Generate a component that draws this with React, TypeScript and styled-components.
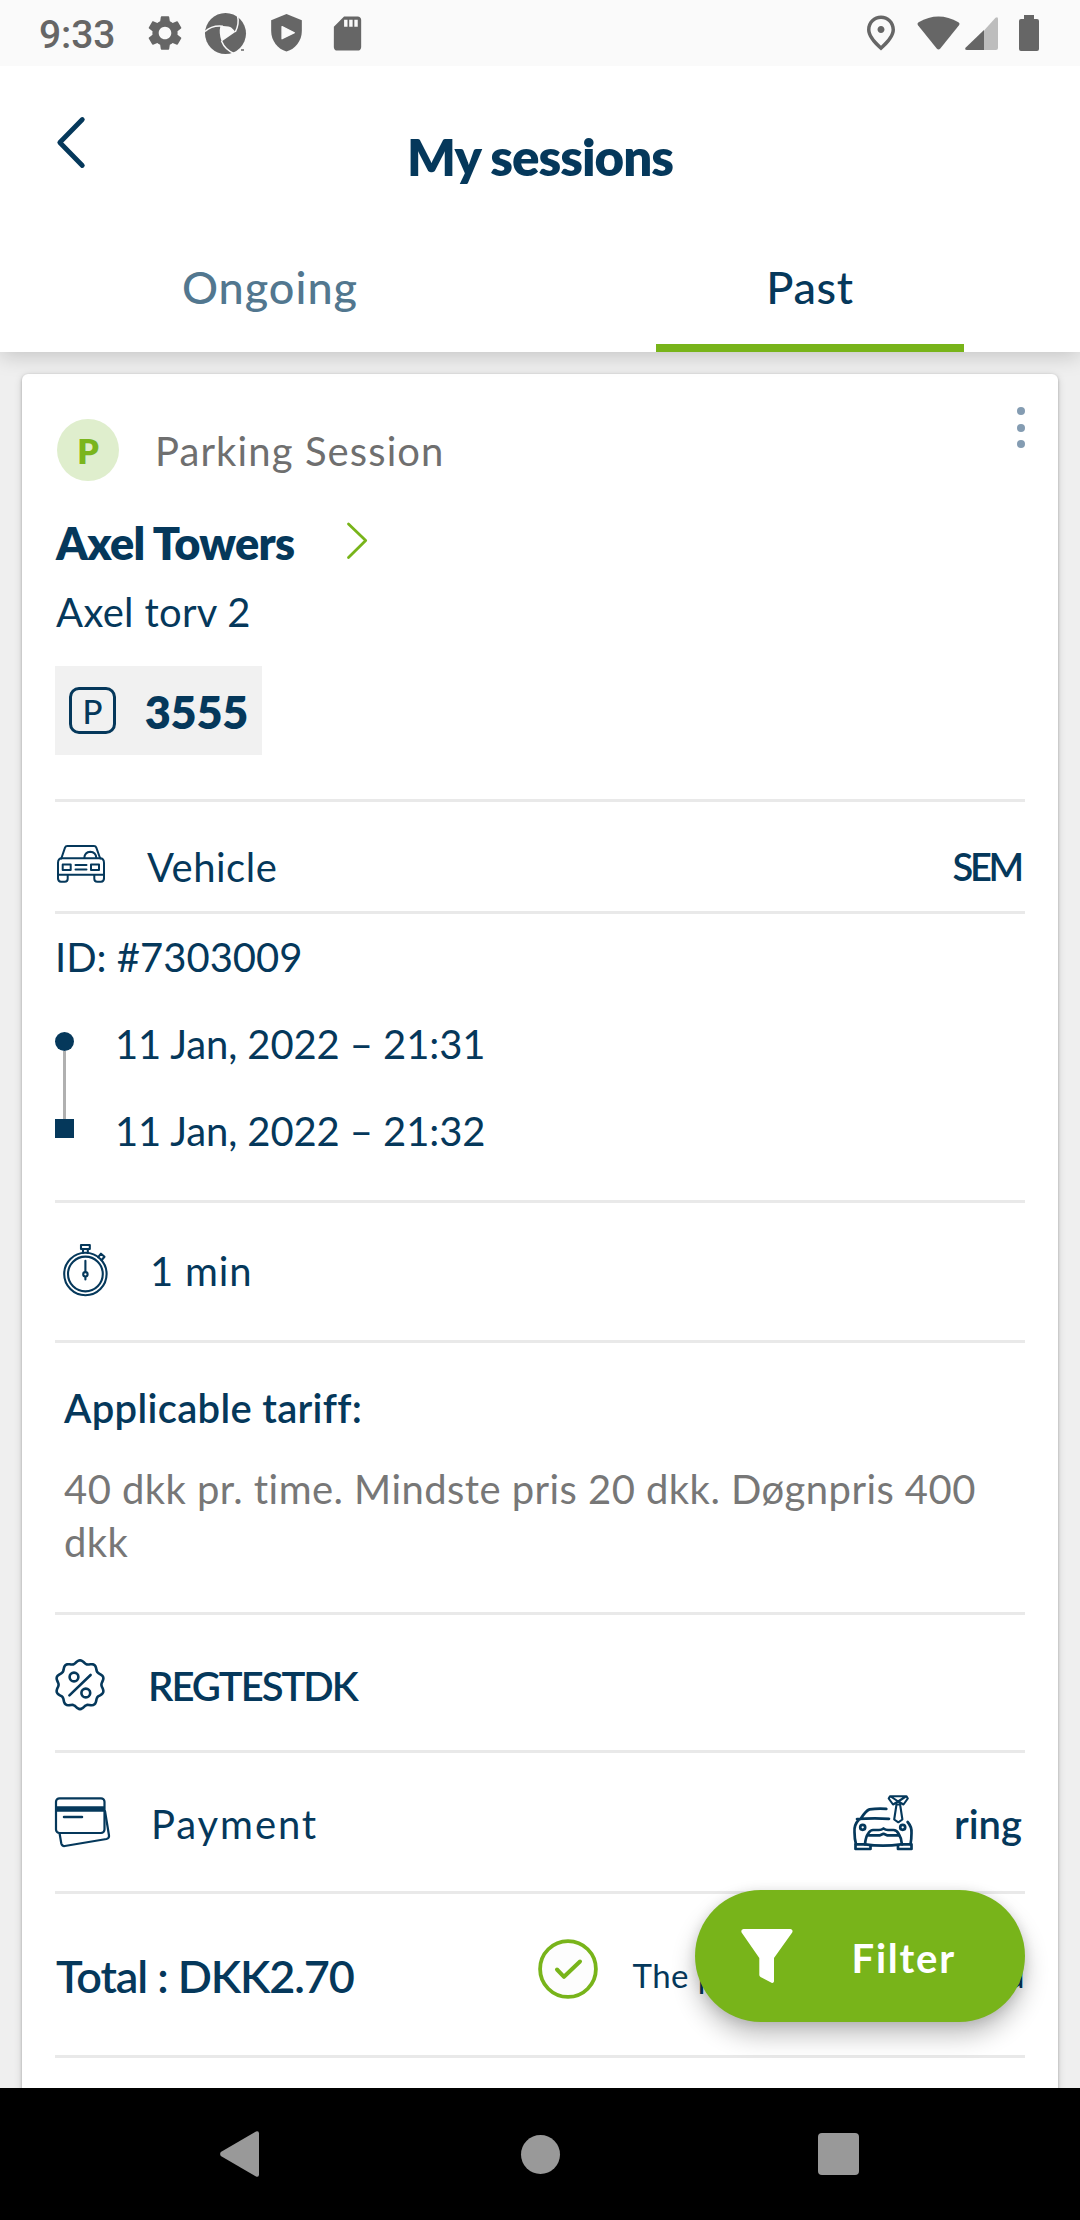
import React from "react";
import styled, { createGlobalStyle } from "styled-components";
import { MdSettings, MdSdCard, MdOutlinePlace } from "react-icons/md";

const NAVY = "#05385b";
const GREEN = "#78b41a";
const GREY = "#666666";

const GlobalStyle = createGlobalStyle`
  *, *::before, *::after { box-sizing: border-box; }
  body {
    margin: 0;
    background: #efefef;
    font-family: Lato, "Open Sans", sans-serif;
    color: ${NAVY};
  }
  button { font-family: inherit; color: inherit; }
  svg { display: block; flex: none; overflow: visible; }
`;

const Screen = styled.div`
  width: 1080px;
  height: 2220px;
  display: flex;
  flex-direction: column;
  overflow: hidden;
  position: relative;
`;

const StatusBar = styled.div`
  height: 66px;
  flex: none;
  display: flex;
  align-items: center;
  justify-content: space-between;
  padding: 0 41px 0 39px;
  background: #fafafa;
  color: ${GREY};
  position: relative;
  z-index: 2;
`;

const StatusGroup = styled.div`
  display: flex;
  align-items: center;
`;

const Clock = styled.span`
  width: 105px;
  font: 500 39px/46px Roboto, sans-serif;
  letter-spacing: -0.1px;
  padding-top: 3px;
`;

const IconSlot = styled.span<{ $w: number; $ml?: number }>`
  width: ${(p) => p.$w}px;
  height: 42px;
  margin-left: ${(p) => p.$ml ?? 0}px;
  display: flex;
  align-items: center;
  justify-content: center;
`;

const Header = styled.header`
  flex: none;
  height: 286px;
  background: #ffffff;
  box-shadow: 0 4px 20px rgba(0, 0, 0, 0.18);
  display: flex;
  flex-direction: column;
  position: relative;
  z-index: 1;
`;

const TitleBar = styled.div`
  display: grid;
  grid-template-columns: 120px 1fr 120px;
  height: 158px;
`;

const BackButton = styled.button`
  border: 0;
  padding: 51px 0 0 57px;
  background: none;
  display: flex;
  align-items: flex-start;
`;

const PageTitle = styled.h1`
  margin: 0;
  padding-top: 60px;
  text-align: center;
  font-size: 51px;
  line-height: 62px;
  font-weight: 800;
  letter-spacing: -1px;
`;

const Tabs = styled.nav`
  flex: 1;
  display: grid;
  grid-template-columns: 1fr 1fr;
`;

const Tab = styled.button<{ $active?: boolean }>`
  border: 0;
  background: none;
  padding: 36px 0 0;
  display: flex;
  flex-direction: column;
  align-items: center;
  justify-content: space-between;
  font-size: 45px;
  line-height: 54px;
  font-weight: 500;
  letter-spacing: ${(p) => (p.$active ? 0.7 : 1)}px;
  color: ${(p) => (p.$active ? NAVY : "#52778f")};

  &::after {
    content: "";
    width: 308px;
    height: 8px;
    background: ${(p) => (p.$active ? GREEN : "transparent")};
  }
`;

const Content = styled.main`
  flex: 1;
  min-height: 0;
  overflow: hidden;
  padding: 22px 22px 0;
`;

const Card = styled.article`
  height: 1800px;
  padding: 33px 33px 0;
  background: #ffffff;
  border-radius: 6px;
  box-shadow: 0 1px 3px rgba(0, 0, 0, 0.26), 0 2px 8px rgba(0, 0, 0, 0.14);
  display: flex;
  flex-direction: column;
`;

const SessionHead = styled.div`
  height: 74px;
  display: flex;
  align-items: flex-start;
`;

const TypeBadge = styled.span`
  width: 62px;
  height: 62px;
  margin: 12px 36px 0 2px;
  border-radius: 50%;
  background: #dfeecd;
  color: #7ab51d;
  font-size: 34px;
  font-weight: 800;
  display: flex;
  align-items: center;
  justify-content: center;
`;

const Text = styled.span<{ $ls?: number; $w?: number; $size?: number; $color?: string; $mr?: number }>`
  padding-top: 3px;
  margin-right: ${(p) => p.$mr ?? 0}px;
  font-size: ${(p) => p.$size ?? 40}px;
  line-height: 1.2;
  font-weight: ${(p) => p.$w ?? 400};
  letter-spacing: ${(p) => p.$ls ?? 0}px;
  color: ${(p) => p.$color ?? NAVY};
  white-space: nowrap;
`;

const SessionType = styled(Text)`
  margin-top: 17px;
`;

const MoreMenu = styled.button`
  border: 0;
  background: none;
  padding: 0;
  margin-left: auto;
  display: flex;
  flex-direction: column;
  gap: 8.5px;
`;

const MenuDot = styled.span`
  width: 8px;
  height: 8px;
  border-radius: 50%;
  background: #849cb2;
`;

const PlaceRow = styled.div`
  margin-top: 33px;
  padding-left: 1px;
  height: 54px;
  display: flex;
  align-items: center;
  justify-content: space-between;
  width: 312px;
`;

const Address = styled(Text)`
  margin: 17px 0 0 1px;
`;

const AreaCode = styled.div`
  width: 207px;
  height: 89px;
  margin: 30px 0 44px;
  padding: 0 14px;
  background: #f1f1f1;
  display: flex;
  align-items: center;
  justify-content: space-between;
`;

const AreaIcon = styled.span`
  width: 47px;
  height: 47px;
  border: 3px solid ${NAVY};
  border-radius: 10px;
  font-size: 33px;
  font-weight: 500;
  display: flex;
  align-items: center;
  justify-content: center;
`;

const Row = styled.div<{ $h: number; $pt?: number; $pb?: number }>`
  flex: none;
  height: ${(p) => p.$h + 3}px;
  padding: ${(p) => p.$pt ?? 0}px 0 ${(p) => p.$pb ?? 0}px;
  border-top: 3px solid #e9e9e9;
  display: flex;
  align-items: center;
`;

const Section = styled(Row)`
  flex-direction: column;
  align-items: flex-start;
`;

const RowIcon = styled.span<{ $w: number; $lift?: number; $pl?: number }>`
  width: ${(p) => p.$w}px;
  flex: none;
  padding-left: ${(p) => p.$pl ?? 0}px;
  padding-bottom: ${(p) => p.$lift ?? 0}px;
`;

const RowEnd = styled.div`
  margin-left: auto;
  display: flex;
  align-items: center;
`;

const Timeline = styled.div`
  margin-top: 36px;
  display: flex;
  gap: 41px;
`;

const Track = styled.div`
  width: 19px;
  padding-top: 15px;
  display: flex;
  flex-direction: column;
  align-items: center;
`;

const StartMark = styled.span`
  width: 19px;
  height: 19px;
  border-radius: 50%;
  background: ${NAVY};
`;

const TrackLine = styled.span`
  width: 3px;
  height: 68px;
  background: #b0b0b0;
`;

const EndMark = styled.span`
  width: 19px;
  height: 19px;
  background: ${NAVY};
`;

const Dates = styled.div`
  display: flex;
  flex-direction: column;
  gap: 36px;
`;

const TariffBody = styled.div`
  padding-left: 9px;
  display: flex;
  flex-direction: column;
`;

const TariffText = styled.p`
  margin: 31px 0 0;
  width: 940px;
  font-size: 40px;
  line-height: 53px;
  color: #777777;
  letter-spacing: 0.44px;
`;

const FilterButton = styled.button`
  position: absolute;
  left: 695px;
  top: 1890px;
  width: 330px;
  height: 132px;
  border: 0;
  border-radius: 66px;
  padding: 0 69px 0 46px;
  background: ${GREEN};
  box-shadow: 0 14px 24px rgba(0, 0, 0, 0.24), 0 2px 12px rgba(0, 0, 0, 0.12);
  display: flex;
  align-items: center;
  justify-content: space-between;
`;

const NavBar = styled.footer`
  flex: none;
  height: 132px;
  background: #000000;
  display: grid;
  grid-template-columns: 479px 122px 479px;
  align-items: center;
  justify-items: center;
`;

const HomeDot = styled.span`
  width: 39px;
  height: 39px;
  border-radius: 50%;
  background: #999999;
`;

const RecentSquare = styled.span`
  width: 41px;
  height: 42px;
  border-radius: 4px;
  background: #999999;
  margin-right: 5px;
`;

const line = {
  fill: "none",
  stroke: NAVY,
  strokeLinecap: "round" as const,
  strokeLinejoin: "round" as const,
};

const Aperture = () => (
  <svg width="41" height="41" viewBox="0 0 41 41">
    <circle cx="20.5" cy="20.5" r="20.5" fill={GREY} />
    <path d="M15.4 13Q24 12.5 26.5 14.8Q29 17 30.3 19L16.6 28.5Q13.6 20 15.4 13z" fill="#fafafa" />
    <path
      d="M0 18.5Q7 12 18 13.2M30.3 19Q34.5 11 32.5 2.5M16.5 28Q20 37 30 41"
      fill="none"
      stroke="#fafafa"
      strokeWidth="1.5"
    />
    <path d="M36 37h3" stroke={GREY} strokeWidth="1.5" />
  </svg>
);

const Shield = () => (
  <svg width="31" height="37.5" viewBox="3 1 18 22">
    <path d="M12 1L3 4.6v6.4c0 5.55 3.84 10.74 9 12 5.16-1.26 9-6.45 9-12V4.6z" fill={GREY} />
    <path d="M9.4 8.4v7.1L16.6 12z" fill="#fafafa" stroke="#fafafa" strokeWidth=".8" strokeLinejoin="round" />
  </svg>
);

const Wifi = () => (
  <svg width="43" height="34" viewBox="0 0 43 34">
    <path d="M1.2 9.6Q-.4 7.6 1.6 6.3Q21.5-5.5 41.4 6.3Q43.4 7.6 41.8 9.6L23.3 32.5Q21.5 34.3 19.7 32.5z" fill={GREY} />
  </svg>
);

const Signal = () => (
  <svg width="33" height="33" viewBox="0 0 33 33">
    <path d="M19 13.5L30.5.8Q33-.8 33 2V31q0 2-2 2H19z" fill="#bdbdbd" />
    <path d="M19 13v20H2Q-1 32.5.8 30.5z" fill={GREY} />
  </svg>
);

const Battery = () => (
  <svg width="20" height="36" viewBox="0 0 20 36">
    <path d="M5 0h10v4h3q2 0 2 2v28q0 2-2 2H2q-2 0-2-2V6q0-2 2-2h3z" fill={GREY} />
  </svg>
);

const CarIcon = () => (
  <svg width="48" height="38" viewBox="0 0 48 38" {...line} strokeWidth="2">
    <path d="M4.3 13.5L8 2.6Q8.6 1 10.3 1H37q1.7 0 2.3 1.6L43.2 13.5" />
    <path d="M1 33.5V18q0-4.7 4-4.7H43q4 0 4 4.7V33.5" />
    <path d="M1 29.8H47M27.3 13q.4-6 6-6.200 5.600.2 6 6.200" />
    <path d="M1 30v3q0 3.700 3 3.700h3.700q3 0 3-3V30M37.300 30v3.700q0 3 3 3H44q3 0 3-3.700v-3" />
    <path d="M5.700 19.400h8v5.600h-8zM34 19.400h8v5.600h-8zM18.500 20h11M18.500 24.500h11" />
  </svg>
);

const StopwatchIcon = () => (
  <svg width="45" height="52" viewBox="0 0 45 52" {...line} strokeWidth="2.1">
    <circle cx="22.4" cy="30" r="21.2" />
    <circle cx="22.4" cy="30" r="17.4" />
    <path d="M18 1h8.8v4H18zM20 5v4M24.8 5v4" />
    <path d="M35.2 13.2L38 9.7l3.5 3-3 3.5" />
    <path d="M22.4 16.7v11M22.4 33v2.5" />
    <circle cx="22.4" cy="30.3" r="2.2" />
  </svg>
);

const sealPath =
  Array.from({ length: 121 }, (_, i) => {
    const a = (i / 120) * Math.PI * 2;
    const r = 22.9 + 1.5 * Math.cos(10 * a);
    return `${i ? "L" : "M"}${(25 + r * Math.sin(a)).toFixed(2)} ${(25.7 - r * Math.cos(a)).toFixed(2)}`;
  }).join("") + "z";

const DiscountIcon = () => (
  <svg width="50" height="51" viewBox="0 0 50 51" {...line} strokeWidth="2.6">
    <path d={sealPath} />
    <circle cx="19" cy="18" r="4.4" />
    <circle cx="30.8" cy="34" r="4.4" />
    <path d="M35.6 16L14.4 36.4" />
  </svg>
);

const PaymentIcon = () => (
  <svg width="55" height="50" viewBox="0 0 55 50" {...line} strokeWidth="2.2">
    <rect x="1" y="1.3" width="48.5" height="34.7" rx="3.5" />
    <path d="M1 12h48.5" strokeWidth="5.6" strokeLinecap="butt" />
    <path d="M9 20h18" strokeWidth="2.5" />
    <path d="M4.6 36.5L6.3 46.5Q7 49.3 9.8 49L51.5 42Q54.4 41.3 54 38.5L50 14" />
  </svg>
);

const TieCarIcon = () => (
  <svg width="60" height="55" viewBox="0 0 60 55" {...line} strokeWidth="2.7">
    <path d="M33.3 13.8Q24 13.2 16.5 14.4Q13 15.5 7.5 24M4 24Q20 23 36 23.8M6 24.5Q.8 30 1.5 37Q1.5 44 3 49.3" />
    <path d="M54.6 27Q59 32 58.5 38Q58.5 44 57.5 49.3" />
    <path d="M2.5 49.3H12Q30 52 48 49.3H58.5V54H45V50.5M2.5 49.3V54H17.5V50.5" />
    <path d="M12 49.5Q12.5 42 15.5 38Q17.5 35 20 35H26Q28.5 35 30.5 33.5Q32.5 35 35 35H40.5Q43.5 35 45.5 38.5Q48.5 43 49 49.5" />
    <path d="M15.5 40.3H27L30.5 38.8L34 40.3H46" />
    <circle cx="9.7" cy="32.3" r="2.5" />
    <circle cx="49.7" cy="32.3" r="2.5" />
    <path
      d="M37 1.3H53.5L54.8 3.5L50.5 9.5L45.2 6.5L40 9.5L35.7 3.5zM38.5 2L45.2 6.5L52 2M43.5 9.5h3.6L49.4 24.5L45.3 27.3L41.2 24.5z"
      strokeWidth="2.1"
    />
  </svg>
);

const CheckIcon = () => (
  <svg width="60" height="60" viewBox="0 0 60 60">
    <circle cx="30" cy="30" r="27.9" fill="#fdfdfd" stroke={GREEN} strokeWidth="3.8" />
    <path d="M19 30.5l7 7.3L42 22.5" fill="none" stroke={GREEN} strokeWidth="4" strokeLinecap="round" strokeLinejoin="round" />
  </svg>
);

const FunnelIcon = () => (
  <svg width="52" height="54" viewBox="0 0 52 54">
    <path d="M2.5 0H49.5Q52.5.5 51.2 3.5L33 29V52.5Q32.5 54.5 30.5 53.8L19.5 48Q18.3 47.2 18.3 46V29L.6 3.5Q-.5.5 2.5 0z" fill="#fff" />
  </svg>
);

export default function App() {
  return (
    <Screen>
      <GlobalStyle />
      <StatusBar>
        <StatusGroup>
          <Clock>9:33</Clock>
          <IconSlot $w={41}><MdSettings size={42} /></IconSlot>
          <IconSlot $w={41} $ml={20}><Aperture /></IconSlot>
          <IconSlot $w={41} $ml={20}><Shield /></IconSlot>
          <IconSlot $w={41} $ml={20}><MdSdCard size={41} /></IconSlot>
        </StatusGroup>
        <StatusGroup>
          <IconSlot $w={25}><MdOutlinePlace size={42} /></IconSlot>
          <IconSlot $w={43} $ml={24}><Wifi /></IconSlot>
          <IconSlot $w={33} $ml={5}><Signal /></IconSlot>
          <IconSlot $w={20} $ml={21}><Battery /></IconSlot>
        </StatusGroup>
      </StatusBar>

      <Header>
        <TitleBar>
          <BackButton aria-label="Back">
            <svg width="28" height="51" viewBox="0 0 28 51" {...line} strokeWidth="4.8">
              <path d="M25.3 2.5L2.8 25.5L25.3 48.5" />
            </svg>
          </BackButton>
          <PageTitle>My sessions</PageTitle>
        </TitleBar>
        <Tabs>
          <Tab>Ongoing</Tab>
          <Tab $active>Past</Tab>
        </Tabs>
      </Header>

      <Content>
        <Card>
          <SessionHead>
            <TypeBadge>P</TypeBadge>
            <SessionType $ls={1.1} $color="#6f6f6f">Parking Session</SessionType>
            <MoreMenu aria-label="More">
              <MenuDot />
              <MenuDot />
              <MenuDot />
            </MoreMenu>
          </SessionHead>
          <PlaceRow>
            <Text $size={45} $w={800} $ls={-0.7}>Axel Towers</Text>
            <svg width="20" height="36" viewBox="0 0 20 36" {...line} stroke={GREEN} strokeWidth="2.8">
              <path d="M1.5 1L18.7 17.5L1.5 34.5" />
            </svg>
          </PlaceRow>
          <Address $ls={0.3}>Axel torv 2</Address>
          <AreaCode>
            <AreaIcon>P</AreaIcon>
            <Text $size={45} $w={800} $ls={-0.3}>3555</Text>
          </AreaCode>

          <Row $h={109} $pt={18}>
            <RowIcon $w={92} $pl={2} $lift={4}><CarIcon /></RowIcon>
            <Text $ls={0.5}>Vehicle</Text>
            <RowEnd><Text $w={600} $size={38} $ls={-3.2} $mr={4}>SEM</Text></RowEnd>
          </Row>

          <Section $h={286} $pt={16}>
            <Text>ID: #7303009</Text>
            <Timeline>
              <Track>
                <StartMark />
                <TrackLine />
                <EndMark />
              </Track>
              <Dates>
                <Text $ls={-0.1}>11 Jan, 2022 – 21:31</Text>
                <Text $ls={-0.1}>11 Jan, 2022 – 21:32</Text>
              </Dates>
            </Timeline>
          </Section>

          <Row $h={137} $pb={4}>
            <RowIcon $w={95} $pl={8}><StopwatchIcon /></RowIcon>
            <Text $ls={0.8}>1 min</Text>
          </Row>

          <Section $h={269} $pt={38}>
            <TariffBody>
              <Text $w={600} $ls={0.3}>Applicable tariff:</Text>
              <TariffText>40 dkk pr. time. Mindste pris 20 dkk. Døgnpris 400 dkk</TariffText>
            </TariffBody>
          </Section>

          <Row $h={135} $pt={3}>
            <RowIcon $w={93}><DiscountIcon /></RowIcon>
            <Text $w={600} $ls={-2}>REGTESTDK</Text>
          </Row>

          <Row $h={138}>
            <RowIcon $w={96}><PaymentIcon /></RowIcon>
            <Text $ls={1.9}>Payment</Text>
            <RowEnd>
              <RowIcon $w={101}><TieCarIcon /></RowIcon>
              <Text $w={600} $mr={3}>ring</Text>
            </RowEnd>
          </Row>

          <Row $h={161}>
            <RowIcon $w={1} />
            <Text $size={45} $w={600} $ls={-1.1}>Total : DKK2.70</Text>
            <RowEnd>
              <RowIcon $w={94} $lift={11}><CheckIcon /></RowIcon>
              <Text $size={33} $ls={0.47}>The payment is completed</Text>
            </RowEnd>
          </Row>
          <Row $h={60} />
        </Card>
      </Content>

      <FilterButton>
        <FunnelIcon />
        <Text $w={700} $color="#fff" $ls={1.8}>Filter</Text>
      </FilterButton>

      <NavBar>
        <svg width="39" height="46" viewBox="0 0 39 46">
          <path d="M.8 21Q-.5 23 .8 25L36 45.5Q39 46.5 39 43.5V2.5Q39-.5 36 .5z" fill="#999999" />
        </svg>
        <HomeDot />
        <RecentSquare />
      </NavBar>
    </Screen>
  );
}
